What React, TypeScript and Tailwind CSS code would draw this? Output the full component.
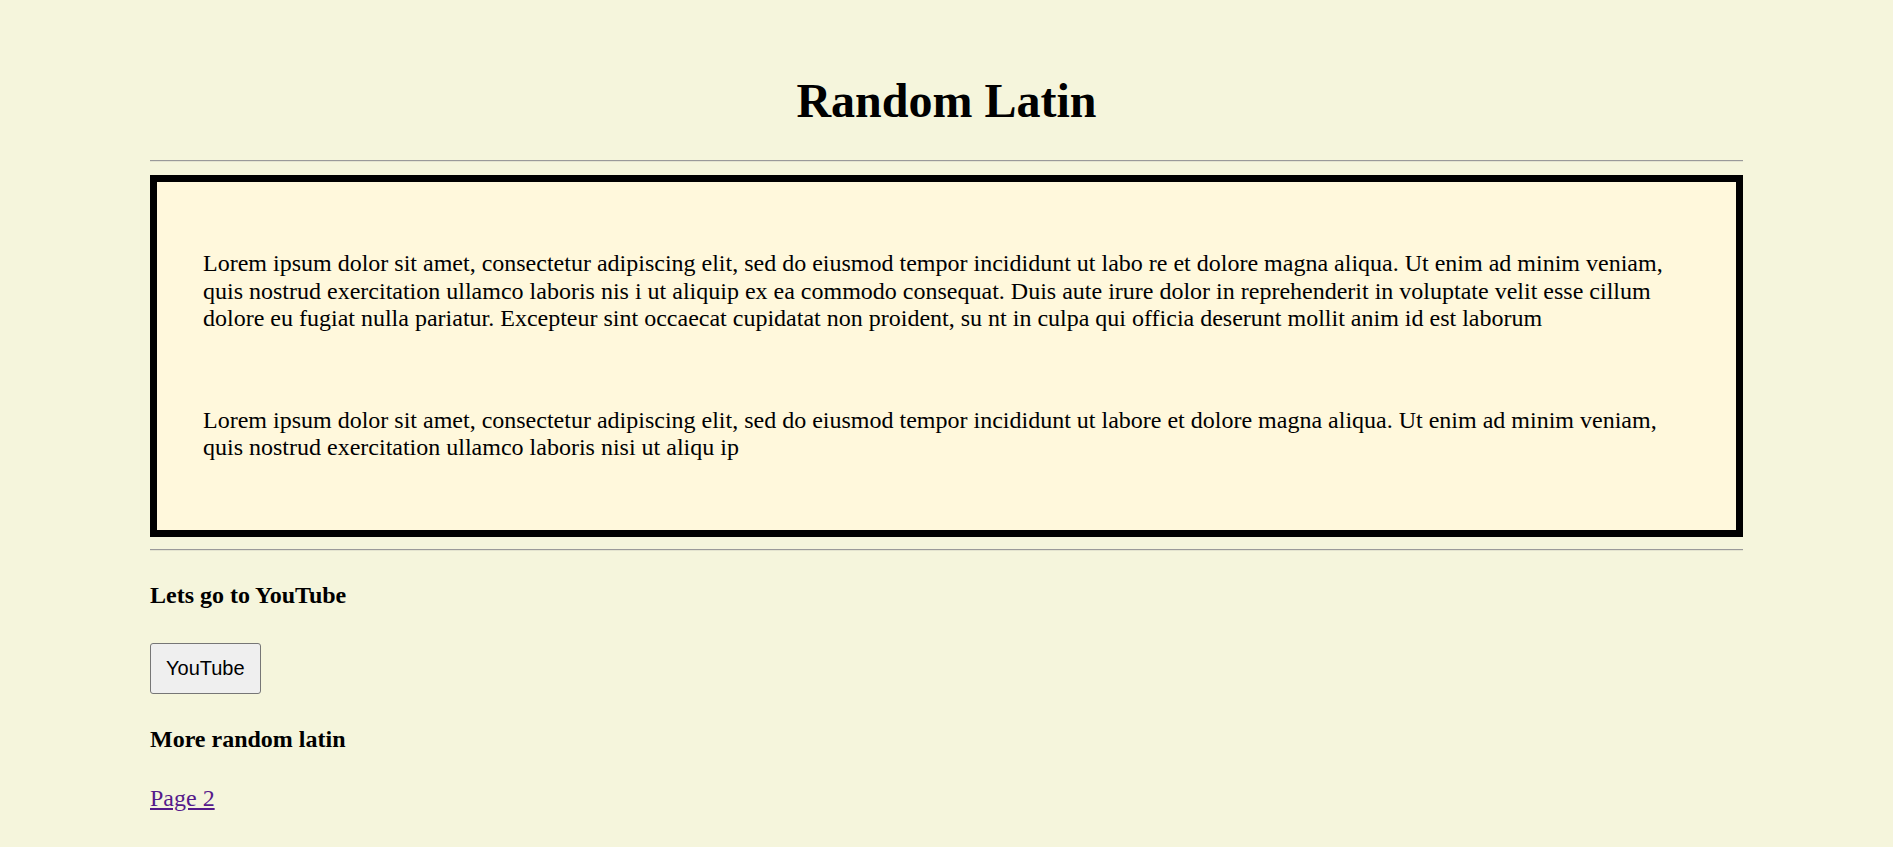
export default function App() {
  return (
    <div className="min-h-screen bg-[#f5f5dc] px-[150px] pt-[73px] pb-[40px] font-['Liberation_Serif',serif] text-black">
      <h1 className="text-center text-[48px] font-bold leading-[55px] mb-[32px]">
        Random Latin
      </h1>
      <hr className="border-0 border-t border-b border-t-[#9a9a9a] border-b-[#e4e4d0] mb-[13px]" />

      <div className="border-[7px] border-black bg-[#fff8dc] pt-[68px] pb-[68px] px-[46px] text-[24px] leading-[27.6px]">
        <p>
          Lorem ipsum dolor sit amet, consectetur adipiscing elit, sed do eiusmod tempor incididunt ut labo re et dolore
          magna aliqua. Ut enim ad minim veniam, quis nostrud exercitation ullamco laboris nis i ut aliquip ex ea commodo
          consequat. Duis aute irure dolor in reprehenderit in voluptate velit esse cillum dolore eu fugiat nulla
          pariatur. Excepteur sint occaecat cupidatat non proident, su nt in culpa qui officia deserunt mollit anim id est
          laborum
        </p>
        <p className="mt-[74px]">
          Lorem ipsum dolor sit amet, consectetur adipiscing elit, sed do eiusmod tempor incididunt ut labore et dolore
          magna aliqua. Ut enim ad minim veniam, quis nostrud exercitation ullamco laboris nisi ut aliqu ip
        </p>
      </div>

      <hr className="border-0 border-t border-b border-t-[#9a9a9a] border-b-[#e4e4d0] mt-[12px]" />

      <h4 className="mt-[31px] text-[24px] font-bold leading-[27.6px]">Lets go to YouTube</h4>
      <button className="mt-[33px] block rounded-[3px] border border-[#767676] bg-[#efefef] px-[15px] py-[13px] font-['Liberation_Sans',Arial,sans-serif] text-[20px] leading-[normal] text-black">
        YouTube
      </button>

      <h4 className="mt-[32px] text-[24px] font-bold leading-[27.6px]">More random latin</h4>
      <p className="mt-[32px] text-[24px] leading-[27.6px]">
        <a href="#page2" className="text-[#551a8b] underline">
          Page 2
        </a>
      </p>
    </div>
  );
}
